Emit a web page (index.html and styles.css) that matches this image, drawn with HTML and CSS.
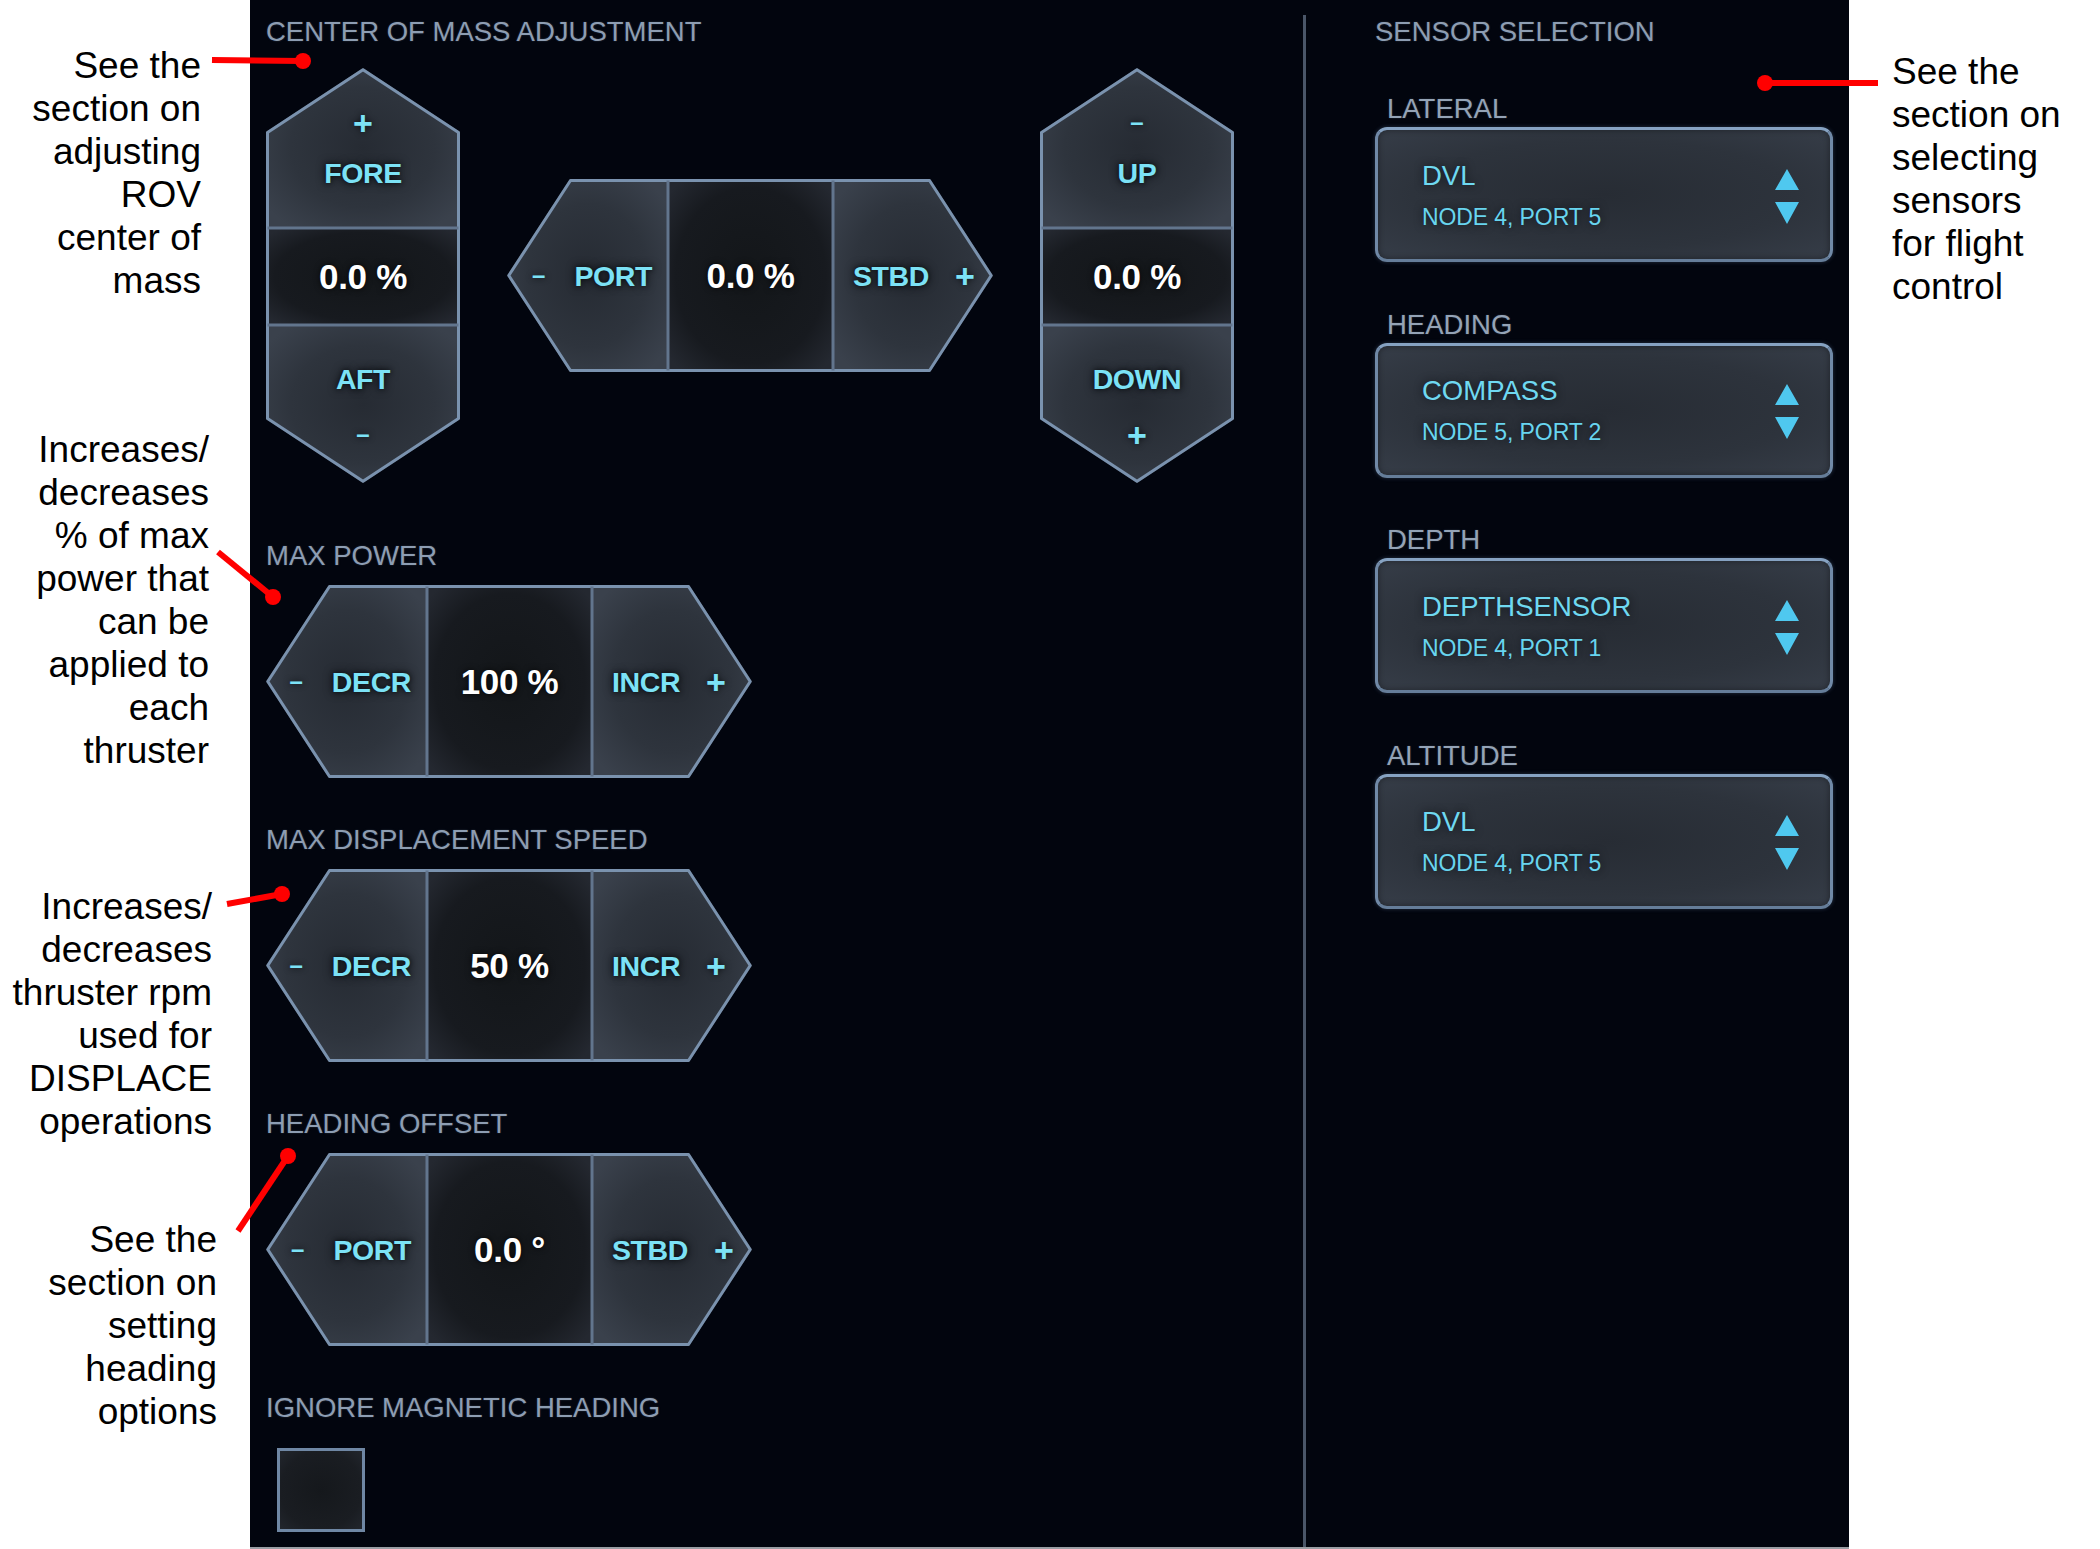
FILE: index.html
```html
<!DOCTYPE html>
<html lang="en">
<head>
<meta charset="utf-8">
<title>Flight Settings</title>
<link rel="stylesheet" href="styles.css">
</head>
<body>
<div class="page">
  <aside class="notes notes-left">
    <p class="note n1">See the<br>section on<br>adjusting<br>ROV<br>center of<br>mass</p>
    <p class="note n2">Increases/<br>decreases<br>% of max<br>power that<br>can be<br>applied to<br>each<br>thruster</p>
    <p class="note n3">Increases/<br>decreases<br>thruster rpm<br>used for<br>DISPLACE<br>operations</p>
    <p class="note n4">See the<br>section on<br>setting<br>heading<br>options</p>
  </aside>

  <main class="panel">
    <section class="left">
      <h2 class="title">CENTER OF MASS ADJUSTMENT</h2>
      <div class="com-row">
        <div class="vctl">
          <svg class="shape" viewBox="0 0 194 415" width="194" height="415">
            <defs>
              <radialGradient id="btn" cx="50%" cy="50%" r="62%">
                <stop offset="0" stop-color="#262b33"/>
                <stop offset="0.6" stop-color="#2e343d"/>
                <stop offset="1" stop-color="#3a414c"/>
              </radialGradient>
              <radialGradient id="val" cx="50%" cy="50%" r="65%">
                <stop offset="0" stop-color="#131619"/>
                <stop offset="0.7" stop-color="#171a1f"/>
                <stop offset="1" stop-color="#242830"/>
              </radialGradient>
            </defs>
            <path d="M97 0L194 64V160H0V64Z" fill="url(#btn)"/>
            <rect x="0" y="160" width="194" height="97" fill="url(#val)"/>
            <path d="M0 257H194V351L97 415L0 351Z" fill="url(#btn)"/>
            <path d="M97 1.8L192.5 64.5V350.5L97 413.2L1.5 350.5V64.5Z" fill="none" stroke="#7a92ae" stroke-width="3" stroke-linejoin="round"/>
            <path d="M1.5 160H192.5M1.5 257H192.5" stroke="#62758d" stroke-width="3"/>
          </svg>
          <div class="vbody">
            <div class="vseg vseg-top"><span class="sign plus">+</span><span class="btn-label">FORE</span></div>
            <div class="vseg vseg-val"><span class="value">0.0 %</span></div>
            <div class="vseg vseg-bot"><span class="btn-label">AFT</span><span class="sign minus">–</span></div>
          </div>
        </div>

        <div class="hctl">
          <svg class="shape" viewBox="0 0 486 193" width="486" height="193">
            <path d="M63 0H161V193H63L0 96.5Z" fill="url(#btn)"/>
            <rect x="161" y="0" width="165" height="193" fill="url(#val)"/>
            <path d="M326 0H423L486 96.5L423 193H326Z" fill="url(#btn)"/>
            <path d="M63.5 1.5H422.5L484.2 96.5L422.5 191.5H63.5L1.8 96.5Z" fill="none" stroke="#7a92ae" stroke-width="3" stroke-linejoin="round"/>
            <path d="M161 1.5V191.5M326 1.5V191.5" stroke="#62758d" stroke-width="3"/>
          </svg>
          <div class="hbody">
            <div class="hseg hseg-l"><span class="sign minus">–</span><span class="btn-label">PORT</span></div>
            <div class="hseg hseg-c"><span class="value">0.0 %</span></div>
            <div class="hseg hseg-r"><span class="btn-label">STBD</span><span class="sign plus">+</span></div>
          </div>
        </div>

        <div class="vctl">
          <svg class="shape" viewBox="0 0 194 415" width="194" height="415">
            <path d="M97 0L194 64V160H0V64Z" fill="url(#btn)"/>
            <rect x="0" y="160" width="194" height="97" fill="url(#val)"/>
            <path d="M0 257H194V351L97 415L0 351Z" fill="url(#btn)"/>
            <path d="M97 1.8L192.5 64.5V350.5L97 413.2L1.5 350.5V64.5Z" fill="none" stroke="#7a92ae" stroke-width="3" stroke-linejoin="round"/>
            <path d="M1.5 160H192.5M1.5 257H192.5" stroke="#62758d" stroke-width="3"/>
          </svg>
          <div class="vbody">
            <div class="vseg vseg-top"><span class="sign minus">–</span><span class="btn-label">UP</span></div>
            <div class="vseg vseg-val"><span class="value">0.0 %</span></div>
            <div class="vseg vseg-bot"><span class="btn-label">DOWN</span><span class="sign plus">+</span></div>
          </div>
        </div>
      </div>

      <div class="group group-first">
        <h3 class="label">MAX POWER</h3>
        <div class="hctl">
          <svg class="shape" viewBox="0 0 486 193" width="486" height="193">
            <path d="M63 0H161V193H63L0 96.5Z" fill="url(#btn)"/>
            <rect x="161" y="0" width="165" height="193" fill="url(#val)"/>
            <path d="M326 0H423L486 96.5L423 193H326Z" fill="url(#btn)"/>
            <path d="M63.5 1.5H422.5L484.2 96.5L422.5 191.5H63.5L1.8 96.5Z" fill="none" stroke="#7a92ae" stroke-width="3" stroke-linejoin="round"/>
            <path d="M161 1.5V191.5M326 1.5V191.5" stroke="#62758d" stroke-width="3"/>
          </svg>
          <div class="hbody">
            <div class="hseg hseg-l"><span class="sign minus">–</span><span class="btn-label">DECR</span></div>
            <div class="hseg hseg-c"><span class="value">100 %</span></div>
            <div class="hseg hseg-r"><span class="btn-label">INCR</span><span class="sign plus">+</span></div>
          </div>
        </div>
      </div>

      <div class="group">
        <h3 class="label">MAX DISPLACEMENT SPEED</h3>
        <div class="hctl">
          <svg class="shape" viewBox="0 0 486 193" width="486" height="193">
            <path d="M63 0H161V193H63L0 96.5Z" fill="url(#btn)"/>
            <rect x="161" y="0" width="165" height="193" fill="url(#val)"/>
            <path d="M326 0H423L486 96.5L423 193H326Z" fill="url(#btn)"/>
            <path d="M63.5 1.5H422.5L484.2 96.5L422.5 191.5H63.5L1.8 96.5Z" fill="none" stroke="#7a92ae" stroke-width="3" stroke-linejoin="round"/>
            <path d="M161 1.5V191.5M326 1.5V191.5" stroke="#62758d" stroke-width="3"/>
          </svg>
          <div class="hbody">
            <div class="hseg hseg-l"><span class="sign minus">–</span><span class="btn-label">DECR</span></div>
            <div class="hseg hseg-c"><span class="value">50 %</span></div>
            <div class="hseg hseg-r"><span class="btn-label">INCR</span><span class="sign plus">+</span></div>
          </div>
        </div>
      </div>

      <div class="group">
        <h3 class="label">HEADING OFFSET</h3>
        <div class="hctl">
          <svg class="shape" viewBox="0 0 486 193" width="486" height="193">
            <path d="M63 0H161V193H63L0 96.5Z" fill="url(#btn)"/>
            <rect x="161" y="0" width="165" height="193" fill="url(#val)"/>
            <path d="M326 0H423L486 96.5L423 193H326Z" fill="url(#btn)"/>
            <path d="M63.5 1.5H422.5L484.2 96.5L422.5 191.5H63.5L1.8 96.5Z" fill="none" stroke="#7a92ae" stroke-width="3" stroke-linejoin="round"/>
            <path d="M161 1.5V191.5M326 1.5V191.5" stroke="#62758d" stroke-width="3"/>
          </svg>
          <div class="hbody">
            <div class="hseg hseg-l"><span class="sign minus">–</span><span class="btn-label">PORT</span></div>
            <div class="hseg hseg-c"><span class="value">0.0 °</span></div>
            <div class="hseg hseg-r"><span class="btn-label">STBD</span><span class="sign plus">+</span></div>
          </div>
        </div>
      </div>

      <div class="group">
        <h3 class="label label-check">IGNORE MAGNETIC HEADING</h3>
        <div class="checkbox"></div>
      </div>
    </section>

    <div class="divider"></div>

    <section class="right">
      <h2 class="title">SENSOR SELECTION</h2>

      <div class="sensor sensor-first">
        <h3 class="label sensor-label">LATERAL</h3>
        <div class="select">
          <div class="select-text"><span class="sel-main">DVL</span><span class="sel-sub">NODE 4, PORT 5</span></div>
          <svg class="arrows" viewBox="0 0 24 55" width="24" height="55"><path d="M12 0L24 21H0Z M0 33H24L12 55Z" fill="#4fc8ef"/></svg>
        </div>
      </div>

      <div class="sensor">
        <h3 class="label sensor-label">HEADING</h3>
        <div class="select">
          <div class="select-text"><span class="sel-main">COMPASS</span><span class="sel-sub">NODE 5, PORT 2</span></div>
          <svg class="arrows" viewBox="0 0 24 55" width="24" height="55"><path d="M12 0L24 21H0Z M0 33H24L12 55Z" fill="#4fc8ef"/></svg>
        </div>
      </div>

      <div class="sensor">
        <h3 class="label sensor-label">DEPTH</h3>
        <div class="select">
          <div class="select-text"><span class="sel-main">DEPTHSENSOR</span><span class="sel-sub">NODE 4, PORT 1</span></div>
          <svg class="arrows" viewBox="0 0 24 55" width="24" height="55"><path d="M12 0L24 21H0Z M0 33H24L12 55Z" fill="#4fc8ef"/></svg>
        </div>
      </div>

      <div class="sensor">
        <h3 class="label sensor-label">ALTITUDE</h3>
        <div class="select">
          <div class="select-text"><span class="sel-main">DVL</span><span class="sel-sub">NODE 4, PORT 5</span></div>
          <svg class="arrows" viewBox="0 0 24 55" width="24" height="55"><path d="M12 0L24 21H0Z M0 33H24L12 55Z" fill="#4fc8ef"/></svg>
        </div>
      </div>
    </section>
  </main>

  <aside class="notes notes-right">
    <p class="note n5">See the<br>section on<br>selecting<br>sensors<br>for flight<br>control</p>
  </aside>

  <svg class="leaders" viewBox="0 0 2100 1549" width="2100" height="1549">
    <g stroke="#ff0000" stroke-width="6" fill="none">
      <path d="M212 60L303 61"/>
      <path d="M218 552L273 597"/>
      <path d="M227 904L282 894"/>
      <path d="M238 1231L288 1156"/>
      <path d="M1765 83H1878"/>
    </g>
    <g fill="#ff0000">
      <circle cx="303" cy="61" r="8"/>
      <circle cx="273" cy="597" r="8"/>
      <circle cx="282" cy="894" r="8"/>
      <circle cx="288" cy="1156" r="8"/>
      <circle cx="1765" cy="83" r="8"/>
    </g>
  </svg>
</div>
</body>
</html>
```

FILE: styles.css
```css
html, body {
  margin: 0;
  padding: 0;
  background: #ffffff;
}

.page {
  position: relative;
  display: flex;
  width: 2100px;
  height: 1549px;
  overflow: hidden;
  font-family: "Liberation Sans", Arial, sans-serif;
}

/* ---------- annotations ---------- */
.notes {
  flex: none;
  color: #000000;
  font-size: 37px;
  line-height: 43px;
}

.notes-left {
  width: 250px;
  text-align: right;
}

.notes-right {
  width: 251px;
  box-sizing: border-box;
  padding-left: 43px;
}

.note {
  margin: 0;
}

.n1 { margin-top: 44px; margin-right: 49px; }
.n2 { margin-top: 126px; margin-right: 41px; }
.n3 { margin-top: 113px; margin-right: 38px; }
.n4 { margin-top: 75px; margin-right: 33px; }
.n5 { margin-top: 50px; }

.leaders {
  position: absolute;
  left: 0;
  top: 0;
  pointer-events: none;
}

/* ---------- panel ---------- */
.panel {
  flex: none;
  display: flex;
  width: 1599px;
  height: 1549px;
  box-sizing: border-box;
  background: #02050e;
  border-bottom: 2px solid #9a9ea4;
}

.left {
  flex: none;
  width: 1053px;
  box-sizing: border-box;
  padding: 16px 0 0 16px;
}

.divider {
  flex: none;
  width: 3px;
  margin-top: 15px;
  background: #4a5668;
}

.right {
  flex: none;
  padding: 16px 0 0 69px;
}

.title,
.label {
  margin: 0;
  font-size: 27.5px;
  line-height: 32px;
  font-weight: normal;
  color: #8d9db2;
  text-shadow: 0 0 2px rgba(120, 140, 170, 0.35);
  white-space: nowrap;
}

/* ---------- controls ---------- */
.com-row {
  display: flex;
  align-items: center;
  gap: 47px;
  margin-top: 20px;
}

.vctl,
.hctl {
  display: grid;
  flex: none;
}

.vctl { width: 194px; height: 415px; }
.hctl { width: 486px; height: 193px; }

.shape,
.vbody,
.hbody {
  grid-area: 1 / 1;
}

.shape {
  display: block;
}

.vbody {
  display: flex;
  flex-direction: column;
}

.vseg {
  display: flex;
  flex-direction: column;
  align-items: center;
  box-sizing: border-box;
}

.vseg-top { height: 160px; padding-top: 43px; gap: 23px; }
.vseg-val { height: 97px; justify-content: center; }
.vseg-bot { height: 158px; padding-top: 39px; gap: 29px; }

.hbody {
  display: flex;
}

.hseg {
  display: flex;
  align-items: center;
  box-sizing: border-box;
  height: 193px;
}

.hseg-l { width: 161px; justify-content: flex-end; padding-right: 16px; gap: 29px; }
.hseg-c { width: 165px; justify-content: center; }
.hseg-r { width: 160px; justify-content: flex-start; padding-left: 20px; gap: 26px; }

.btn-label {
  display: block;
  font-size: 28.5px;
  line-height: 30px;
  font-weight: bold;
  color: #7ce2f6;
  letter-spacing: -0.4px;
  text-shadow: 0 0 10px rgba(10, 12, 16, 0.9), 0 0 4px rgba(10, 12, 16, 0.8);
  white-space: nowrap;
}

.value {
  display: block;
  font-size: 35px;
  line-height: 40px;
  font-weight: bold;
  color: #ffffff;
  letter-spacing: -0.3px;
  text-shadow: 0 0 6px rgba(0, 0, 0, 0.8);
  white-space: nowrap;
}

.sign {
  display: block;
  height: 24px;
  line-height: 24px;
  color: #7ce2f6;
  font-weight: bold;
  text-shadow: 0 0 6px rgba(10, 12, 16, 0.9);
}

.plus { font-size: 34px; }
.minus { font-size: 24px; line-height: 22px; }

.group { margin-top: 46px; }
.group-first { margin-top: 57px; }
.group .label { margin-bottom: 13px; }
.group .label-check { margin-bottom: 24px; }

.checkbox {
  width: 88px;
  height: 84px;
  margin-left: 11px;
  box-sizing: border-box;
  border: 3px solid #6f87a4;
  background: radial-gradient(ellipse at center, #15181c 0%, #1a1d22 70%, #22262d 100%);
}

/* ---------- sensor selection ---------- */
.sensor { margin-top: 46.5px; }
.sensor-first { margin-top: 45px; }

.sensor-label {
  padding-left: 12px;
  margin-bottom: 2px;
  color: #94a3b6;
}

.select {
  display: flex;
  align-items: center;
  justify-content: space-between;
  width: 458px;
  height: 135px;
  box-sizing: border-box;
  padding: 0 31px 0 44px;
  border: 3px solid #7089a7;
  border-top-color: #86a2c2;
  border-bottom-color: #657d99;
  border-radius: 12px;
  background: radial-gradient(ellipse at center, #272c34 0%, #2d333c 60%, #363d48 100%);
  box-shadow: 0 0 4px rgba(120, 150, 190, 0.3), inset 0 0 6px rgba(0, 0, 0, 0.4);
}

.select-text {
  display: flex;
  flex-direction: column;
  gap: 13px;
  padding-top: 1px;
}

.sel-main {
  font-size: 27.5px;
  line-height: 30px;
  color: #6fd9f1;
  text-shadow: 0 0 8px rgba(10, 12, 16, 0.8);
  white-space: nowrap;
}

.sel-sub {
  font-size: 23px;
  line-height: 26px;
  color: #68d5ef;
  letter-spacing: -0.1px;
  text-shadow: 0 0 8px rgba(10, 12, 16, 0.8);
  white-space: nowrap;
}

.arrows {
  display: block;
  flex: none;
  margin-top: 3px;
}
```
